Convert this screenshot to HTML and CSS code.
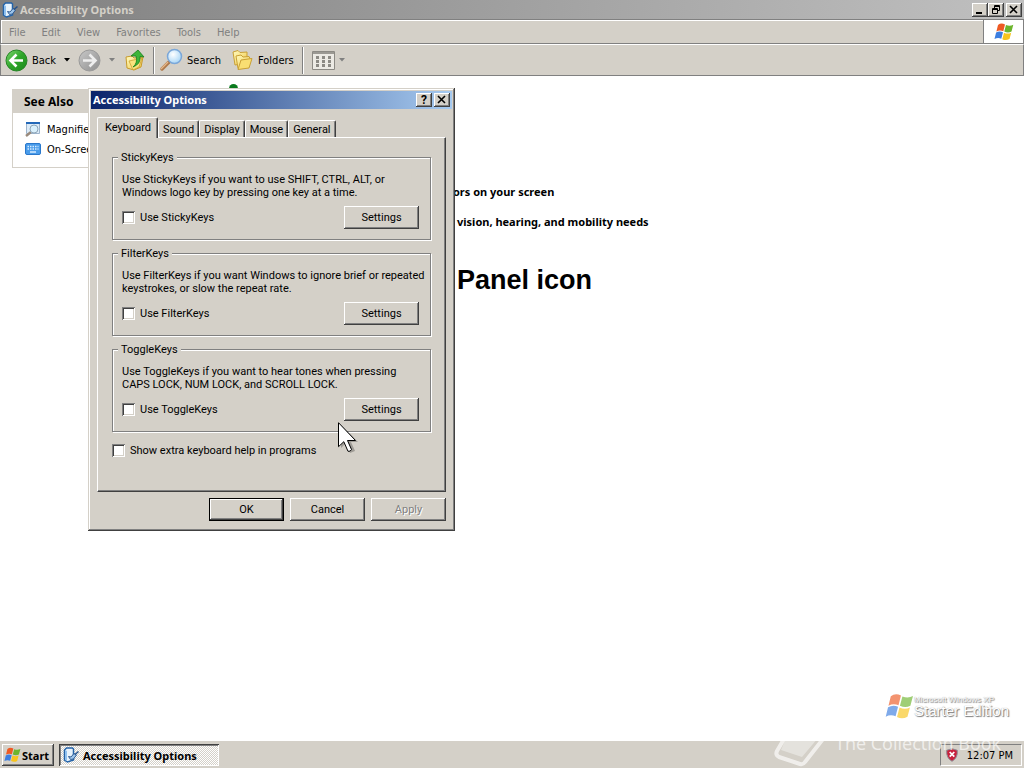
FILE: index.html
```html
<!DOCTYPE html>
<html lang="en">
<head>
    <meta charset="UTF-8">
    <meta name="viewport" content="width=device-width, initial-scale=1.0">
    <title>Accessibility Options</title>
    <link rel="stylesheet" href="styles.css">
</head>
<body>
    <!-- Shared icons -->
    <svg class="defs" width="0" height="0">
        <defs>
            <linearGradient id="g-green" x1="0" y1="0" x2="1" y2="1">
                <stop offset="0" stop-color="#7fd870"/><stop offset=".5" stop-color="#2ea52a"/><stop offset="1" stop-color="#1c8a1c"/>
            </linearGradient>
            <linearGradient id="g-grey" x1="0" y1="0" x2="1" y2="1">
                <stop offset="0" stop-color="#c8c8c8"/><stop offset="1" stop-color="#8e8e8e"/>
            </linearGradient>
            <linearGradient id="g-folder" x1="0" y1="0" x2="1" y2="1">
                <stop offset="0" stop-color="#fffbc0"/><stop offset="1" stop-color="#f0c84a"/>
            </linearGradient>
            <radialGradient id="g-lens" cx=".4" cy=".35" r=".7">
                <stop offset="0" stop-color="#fff"/><stop offset="1" stop-color="#a4d4f6"/>
            </radialGradient>
            <symbol id="flag" viewBox="0 0 20 18">
                <path fill="#ee5a24" d="M4 2q3-2.500 7-.6L9.300 8.200Q6 6.500 2.400 8.400z"/>
                <path fill="#6cb52d" d="M12 2.100q4 1.500 7.300-.3L17.500 8.500q-3.500 1.800-7.200 0z"/>
                <path fill="#3c7ee0" d="M2.100 9.500q3.500-2 6.900-.3L7.300 15.800Q4 14.300.5 16z"/>
                <path fill="#f8c41c" d="M10 9.700q3.700 1.700 7.200 0L15.500 16q-3.700 2-7.200.2z"/>
            </symbol>
            <symbol id="access" viewBox="0 0 16 16">
                <path fill="#e8f3fc" stroke="#2463a8" stroke-width="1.500" d="M1.500 3l2-2h6l1 1v11l-6 2-3-2z"/>
                <path fill="#8fc0ee" d="M2 3l2 1v10l-2-1z"/>
                <path fill="#9cc4ea" stroke="#24508a" stroke-width=".9" d="M5.500 9.500l2.500.5 3-3.500 2.500 1.500-3 4-3 .5z"/>
                <path stroke="#24508a" stroke-width="1.500" d="M12 7.500l3.500-3"/>
            </symbol>
        </defs>
    </svg>

    <div class="window">
        <header class="title-bar inactive">
            <svg class="title-icon" width="16" height="16"><use href="#access"/></svg>
            <h1 class="title-text">Accessibility Options</h1>
            <div class="caption-buttons">
                <button class="caption-button" aria-label="Minimize"><svg width="10" height="10" viewBox="0 0 10 10"><path d="M1 7h6v2H1z"/></svg></button>
                <button class="caption-button" aria-label="Restore"><svg width="10" height="10" viewBox="0 0 10 10"><path fill="none" stroke="#000" d="M3.500 3V.5h5v5H7M3 1.500h6M1.500 3.500h5v5h-5zM1 4.500h6"/></svg></button>
                <button class="caption-button close" aria-label="Close"><svg width="10" height="10" viewBox="0 0 10 10"><path fill="none" stroke="#000" stroke-width="1.600" d="M1 1l7 7M8 1L1 8"/></svg></button>
            </div>
        </header>

        <div class="menu-row">
            <nav class="menu">
                <button>File</button>
                <button>Edit</button>
                <button>View</button>
                <button>Favorites</button>
                <button>Tools</button>
                <button>Help</button>
            </nav>
            <div class="throbber"><svg width="20" height="18"><use href="#flag"/></svg></div>
        </div>

        <div class="toolbar">
            <button class="tool back">
                <svg width="23" height="23" viewBox="0 0 23 23"><circle cx="11.500" cy="11.500" r="10.500" fill="url(#g-green)" stroke="#248424"/><path fill="none" stroke="#fff" stroke-width="2.600" d="M18 11.500H6M11.500 5.500l-6 6 6 6"/></svg>
                Back
                <svg class="arrow" width="7" height="4"><path d="M0 0h6L3 3.500z"/></svg>
            </button>
            <button class="tool forward" aria-label="Forward">
                <svg width="23" height="23" viewBox="0 0 23 23"><circle cx="11.500" cy="11.500" r="10.500" fill="url(#g-grey)" stroke="#999"/><path fill="none" stroke="#eee" stroke-width="2.600" d="M5 11.500h12M11.500 5.500l6 6-6 6"/></svg>
                <svg class="arrow" width="7" height="4"><path fill="#808080" d="M0 0h6L3 3.500z"/></svg>
            </button>
            <button class="tool" aria-label="Up">
                <svg width="20" height="22" viewBox="0 0 20 22"><path fill="url(#g-folder)" stroke="#c79a2c" d="M1 8l6-1 2 2 9-1-2 10-7 3-7-2z"/><path fill="#f9e27d" stroke="#c79a2c" stroke-width=".7" d="M4 12l9-2 4-1-3 9-6 3z"/><path fill="#3cb53a" stroke="#177d1b" stroke-width=".8" d="M8 18q5-4 3-11H6l7-6 6 7-4-.5Q16 15 8 18z"/></svg>
            </button>
            <span class="separator"></span>
            <button class="tool search">
                <svg width="24" height="24" viewBox="0 0 24 24"><path stroke="#b07a4c" stroke-width="3.500" stroke-linecap="round" d="M3 21l7-7"/><path stroke="#e6b98c" stroke-width="1.200" d="M2 21l7-7"/><circle cx="15.500" cy="8.500" r="7" fill="url(#g-lens)" stroke="#7ba7d8" stroke-width="1.500"/></svg>
                Search
            </button>
            <button class="tool folders">
                <svg width="22" height="22" viewBox="0 0 22 22"><path fill="url(#g-folder)" stroke="#c9a035" d="M1 3l5-1.500 2 2 7-.5v11l-12 2z"/><path fill="url(#g-folder)" stroke="#c9a035" d="M4 7l5-1 2 2 6-.5 1 2-4 9-8 1z"/><path fill="#f9df72" stroke="#c9a035" d="M9 11l11-1.500-3 9.500-11 1.500z"/></svg>
                Folders
            </button>
            <span class="separator"></span>
            <button class="tool views" aria-label="Views">
                <svg width="23" height="19" viewBox="0 0 23 19"><path fill="#eceae4" stroke="#8c8a84" d="M.5.5h22v18H.5z"/><path fill="#9b9993" d="M1 1h21v2H1z"/><path stroke="#8c8a84" stroke-width="3" stroke-dasharray="3 3" d="M4 6.500h15M4 10.500h15M4 14.500h15"/></svg>
                <svg class="arrow" width="7" height="4"><path fill="#808080" d="M0 0h6L3 3.500z"/></svg>
            </button>
        </div>

        <div class="content">
            <aside class="see-also">
                <h2>See Also</h2>
                <ul>
                    <li>
                        <svg width="16" height="16"><path fill="#dcebf8" stroke="#9db4cc" d="M1.500 1.500h13v11h-13z"/><path fill="#2468b8" d="M1 1h14v2H1z"/><path stroke="#9a8a7c" stroke-width="2.500" d="M1 15l5-4"/><circle cx="9" cy="8" r="4" fill="#d9f0fc" stroke="#8fa6b8"/></svg>
                        <a href="#">Magnifier</a>
                    </li>
                    <li>
                        <svg width="16" height="16"><rect x=".5" y="2.500" width="15" height="11" rx="1.500" fill="#4a9cea" stroke="#2a78cc"/><path stroke="#d8ecff" stroke-width="1.500" stroke-dasharray="1.500 1" d="M2.500 5.500h11M2.500 8h11"/><path stroke="#d8ecff" stroke-width="1.500" d="M5 11h6"/></svg>
                        <a href="#">On-Screen</a>
                    </li>
                </ul>
            </aside>
            <main class="tasks">
                <svg class="dot" width="9" height="9"><circle cx="4.500" cy="4.500" r="4.500" fill="#0a7a1e"/></svg>
                <p>ors on your screen</p>
                <p>vision, hearing, and mobility needs</p>
                <h2>Panel icon</h2>
            </main>
            <div class="edition">
                <svg width="29" height="27" viewBox="0 0 20 18"><use href="#flag"/></svg>
                <div>
                    <span class="edition-small">Microsoft Windows XP</span>
                    <span class="edition-big">Starter Edition</span>
                </div>
            </div>
        </div>
    </div>

    <section class="dialog" role="dialog" aria-label="Accessibility Options">
        <header class="title-bar active">
            <h2 class="title-text">Accessibility Options</h2>
            <div class="caption-buttons">
                <button class="caption-button help" aria-label="Help">?</button>
                <button class="caption-button close" aria-label="Close"><svg width="10" height="10" viewBox="0 0 10 10"><path fill="none" stroke="#000" stroke-width="1.600" d="M1 1l7 7M8 1L1 8"/></svg></button>
            </div>
        </header>
        <form class="dialog-body">
            <div class="tabs" role="tablist">
                <button type="button" class="tab selected" role="tab">Keyboard</button>
                <button type="button" class="tab" role="tab">Sound</button>
                <button type="button" class="tab" role="tab">Display</button>
                <button type="button" class="tab" role="tab">Mouse</button>
                <button type="button" class="tab" role="tab">General</button>
            </div>
            <div class="panel">
                <fieldset>
                    <legend>StickyKeys</legend>
                    <p>Use StickyKeys if you want to use SHIFT, CTRL, ALT, or<br>Windows logo key by pressing one key at a time.</p>
                    <div class="option-row">
                        <label class="check"><input type="checkbox">Use StickyKeys</label>
                        <button type="button" class="button">Settings</button>
                    </div>
                </fieldset>
                <fieldset>
                    <legend>FilterKeys</legend>
                    <p>Use FilterKeys if you want Windows to ignore brief or repeated<br>keystrokes, or slow the repeat rate.</p>
                    <div class="option-row">
                        <label class="check"><input type="checkbox">Use FilterKeys</label>
                        <button type="button" class="button">Settings</button>
                    </div>
                </fieldset>
                <fieldset>
                    <legend>ToggleKeys</legend>
                    <p>Use ToggleKeys if you want to hear tones when pressing<br>CAPS LOCK, NUM LOCK, and SCROLL LOCK.</p>
                    <div class="option-row">
                        <label class="check"><input type="checkbox">Use ToggleKeys</label>
                        <button type="button" class="button">Settings</button>
                    </div>
                </fieldset>
                <label class="check extra"><input type="checkbox">Show extra keyboard help in programs</label>
            </div>
            <div class="actions">
                <button type="button" class="button default">OK</button>
                <button type="button" class="button">Cancel</button>
                <button type="button" class="button" disabled>Apply</button>
            </div>
        </form>
    </section>

    <svg class="cursor" width="22" height="34" viewBox="0 0 22 34">
        <path fill="#000" opacity=".25" d="M3 3v23l5-5 4 10 5-2-4-9h7z"/>
        <path fill="#fff" stroke="#000" d="M.5.700v24l5.300-5 4.200 9.600q2.500.5 3.500-1.800L9.500 18.500h8z"/>
    </svg>

    <footer class="taskbar">
        <button class="start"><svg width="17" height="16" viewBox="0 0 20 18"><use href="#flag"/></svg>Start</button>
        <button class="task"><svg width="16" height="16"><use href="#access"/></svg>Accessibility Options</button>
        <div class="tray">
            <svg width="12" height="14" viewBox="0 0 12 14"><path fill="#c8203c" stroke="#8c8c94" d="M6 .7l5.300 1.600Q12 10 6 13.300 0 10 .7 2.300z"/><path stroke="#fff" stroke-width="1.700" d="M3.700 4l4.600 4.600M8.300 4L3.700 8.600"/></svg>
            <span>12:07 PM</span>
        </div>
    </footer>

    <div class="watermark">
        <svg width="52" height="30" viewBox="0 0 52 30"><path fill="none" stroke="#fff" stroke-width="4" stroke-linejoin="round" d="M49 1L31 24q-2 3-5 2L5 19q-4-2-2-6L10 1"/><path fill="#fff" opacity=".6" d="M12 0h32L28 19 7 12z"/></svg>
        <span>The Collection Book</span>
    </div>
</body>
</html>
```
FILE: styles.css
```css
* {
    box-sizing: border-box;
}
body {
    margin: 0;
    height: 100vh;
    display: flex;
    flex-direction: column;
    overflow: hidden;
    background: #fff;
    color: #000;
    font-family: "DejaVu Sans Condensed", "DejaVu Sans", sans-serif;
    font-size: 11px;
    line-height: 13px;
}
h1, h2, p, ul {
    margin: 0;
    padding: 0;
}
button {
    margin: 0;
    padding: 0;
    border: none;
    background: none;
    color: inherit;
    font: inherit;
}
svg {
    display: block;
    flex: none;
}
.defs {
    position: absolute;
}

/* Title bars */
.title-bar {
    display: flex;
    align-items: center;
    height: 18px;
    padding: 0 2px;
}
.title-text {
    flex: 1;
    font-family: "Noto Sans", sans-serif;
    font-size: 11px;
    font-weight: bold;
    line-height: 18px;
}
.title-bar.inactive {
    height: 19px;
    background: linear-gradient(to right, #808080, #c0c0c0);
    color: #d4d0c8;
}
.title-bar.active {
    background: linear-gradient(to right, #0a246a, #a6caf0);
    color: #fff;
}
.title-icon {
    margin-right: 2px;
}
.caption-buttons {
    display: flex;
}
.caption-button {
    display: flex;
    align-items: center;
    justify-content: center;
    width: 16px;
    height: 14px;
    background: #d4d0c8;
    box-shadow: inset -1px -1px #404040, inset 1px 1px #fff, inset -2px -2px #808080;
    color: #000;
}
.caption-button.close {
    margin-left: 2px;
}
.caption-button.help {
    font-size: 12px;
    font-weight: bold;
}

/* Explorer window */
.window {
    flex: 1;
    display: flex;
    flex-direction: column;
    min-height: 0;
}
.menu-row {
    display: flex;
    height: 25px;
    border: 1px solid #808080;
    background: #d4d0c8;
    box-shadow: inset 1px 1px #fff;
}
.menu {
    flex: 1;
    display: flex;
    align-items: center;
    gap: 16px;
    padding: 2px 0 0 8px;
    color: #808080;
}
.throbber {
    display: flex;
    align-items: center;
    justify-content: center;
    width: 40px;
    border-left: 1px solid #808080;
    background: #fff;
}
.toolbar {
    display: flex;
    align-items: center;
    height: 32px;
    padding-left: 4px;
    border: 1px solid #808080;
    border-top-color: #fff;
    background: #d4d0c8;
}
.tool {
    display: flex;
    align-items: center;
    gap: 4px;
}
.back .arrow {
    margin-left: 4px;
}
.forward {
    gap: 8px;
    margin: 0 9px 0 7px;
}
.separator {
    width: 2px;
    height: 27px;
    margin: 0 4px 0 8px;
    border-left: 1px solid #808080;
    border-right: 1px solid #fff;
}
.folders {
    margin-left: 11px;
}
.views {
    margin-left: 4px;
}

.content {
    flex: 1;
    display: flex;
    position: relative;
    padding: 13px 12px;
}
.see-also {
    align-self: flex-start;
    width: 190px;
    border: 1px solid #d4d0c8;
}
.see-also h2 {
    padding: 0 11px;
    background: #d4d0c8;
    font-family: "Noto Sans", sans-serif;
    font-size: 12px;
    line-height: 23px;
}
.see-also ul {
    display: flex;
    flex-direction: column;
    gap: 4px;
    padding: 8px 12px 10px;
    list-style: none;
}
.see-also li {
    display: flex;
    align-items: center;
    gap: 6px;
}
.see-also a {
    color: #000;
    text-decoration: none;
}
.tasks {
    padding: 96px 0 0 255px;
    font-family: "Noto Sans", sans-serif;
    font-weight: bold;
}
.tasks p {
    margin-bottom: 17px;
}
.tasks p:first-of-type {
    margin-left: -4px;
}
.tasks h2 {
    padding-top: 19px;
    font: bold 27px/32px "Liberation Sans", Arial, sans-serif;
}
.dot {
    position: absolute;
    left: 229px;
    top: 8px;
}
.edition {
    position: absolute;
    right: 15px;
    bottom: 20px;
    display: flex;
    align-items: center;
    color: #fff;
    font-family: "Liberation Sans", Arial, sans-serif;
    text-shadow: 1px 1px 1px #777, 0 0 1px #999;
}
.edition svg {
    opacity: .65;
}
.edition-small {
    display: block;
    font-size: 8px;
    line-height: 8px;
}
.edition-big {
    display: block;
    font-size: 15px;
    line-height: 14px;
}

/* Dialog */
.dialog {
    position: absolute;
    left: 88px;
    top: 88px;
    width: 367px;
    padding: 3px;
    background: #d4d0c8;
    box-shadow: inset -1px -1px #404040, inset 1px 1px #d4d0c8, inset -2px -2px #808080, inset 2px 2px #fff;
    font-family: Roboto, "Liberation Sans", sans-serif;
}
.dialog-body {
    padding: 8px 6px 7px;
}
.tabs {
    display: flex;
    align-items: flex-end;
    height: 20px;
}
.tab {
    height: 17px;
    padding: 0 4px;
    border: solid;
    border-width: 1px 1px 0;
    border-color: #fff #404040 #fff #fff;
    border-radius: 2px 2px 0 0;
    box-shadow: inset -1px 0 #808080;
}
.tab.selected {
    position: relative;
    height: 21px;
    margin-bottom: -1px;
    padding: 0 6px 2px 7px;
    background: #d4d0c8;
}
.panel {
    height: 355px;
    padding: 12px 14px 0;
    border: 1px solid #fff;
    border-right-color: #404040;
    border-bottom-color: #404040;
    box-shadow: inset -1px -1px #808080;
}
fieldset {
    min-width: 0;
    margin: 0 0 6px;
    padding: 0 11px 10px 9px;
    border: 1px solid #808080;
    box-shadow: inset 1px 1px #fff, 1px 1px #fff;
}
legend {
    margin-left: -4px;
    padding: 1px 3px 0;
    background: #d4d0c8;
    line-height: 13px;
}
fieldset p {
    margin: 9px 0 7px;
    white-space: nowrap;
}
.option-row {
    display: flex;
    align-items: center;
    justify-content: space-between;
}
.check {
    display: flex;
    align-items: center;
    gap: 5px;
}
.check.extra {
    margin-top: 12px;
}
.check input {
    appearance: none;
    width: 13px;
    height: 13px;
    margin: 0;
    background: #fff;
    box-shadow: inset 1px 1px #808080, inset -1px -1px #fff, inset 2px 2px #404040, inset -2px -2px #d4d0c8;
}
.button {
    width: 75px;
    height: 23px;
    background: #d4d0c8;
    box-shadow: inset -1px -1px #404040, inset 1px 1px #fff, inset -2px -2px #808080;
}
.button.default {
    border: 1px solid #000;
}
.button:disabled {
    color: #808080;
    text-shadow: 1px 1px #fff;
}
.actions {
    display: flex;
    justify-content: flex-end;
    gap: 6px;
    margin-top: 6px;
}
.cursor {
    position: absolute;
    left: 338px;
    top: 422px;
}

/* Taskbar */
.taskbar {
    display: flex;
    align-items: center;
    gap: 5px;
    height: 28px;
    padding: 2px 2px 1px;
    border-top: 1px solid #fff;
    background: #d4d0c8;
    font-family: "Noto Sans", sans-serif;
}
.start, .task {
    display: flex;
    align-items: center;
    height: 22px;
    font-weight: bold;
}
.start {
    width: 52px;
    padding-left: 2px;
    gap: 1px;
    box-shadow: inset -1px -1px #404040, inset 1px 1px #fff, inset -2px -2px #808080;
}
.task {
    width: 160px;
    padding-left: 4px;
    gap: 4px;
    background: repeating-conic-gradient(#fff 0 25%, #d4d0c8 0 50%) 0 0 / 2px 2px;
    box-shadow: inset 1px 1px #404040, inset -1px -1px #fff, inset 2px 2px #808080;
}
.tray {
    display: flex;
    align-items: center;
    gap: 9px;
    height: 22px;
    margin-left: auto;
    padding: 0 8px 0 5px;
    border: 1px solid;
    border-color: #808080 #fff #fff #808080;
    font-family: "DejaVu Sans Condensed", "DejaVu Sans", sans-serif;
}
.watermark {
    position: absolute;
    right: 23px;
    bottom: 0;
    display: flex;
    gap: 9px;
    color: #fff;
    font: 18px/22px "Open Sans", sans-serif;
    opacity: .65;
    pointer-events: none;
}
.watermark span {
    margin-top: -6px;
}
```
